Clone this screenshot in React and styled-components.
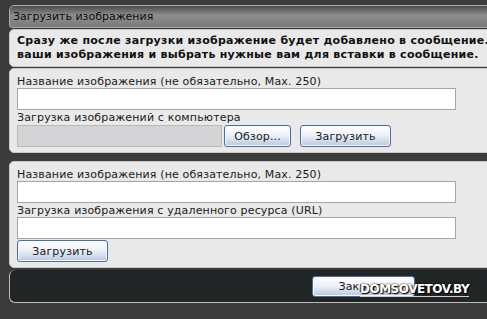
import styled, { createGlobalStyle } from "styled-components";

const Global = createGlobalStyle`
  html, body {
    margin: 0;
    background: #3b3b3b;
    overflow: hidden;
  }
  body {
    font-family: "DejaVu Sans", Verdana, sans-serif;
    font-size: 11px;
    color: #111;
  }
`;

const Dialog = styled.div`
  display: flex;
  flex-direction: column;
  gap: 1px;
  margin: 5px 0 0 9px;
  width: 500px;
`;

const Box = styled.div`
  border: 1px solid #c9c9c9;
  border-radius: 5px;
  background: #e9e9e9;
`;

const Header = styled(Box)`
  height: 21px;
  padding: 0 3px;
  display: flex;
  align-items: center;
  background: linear-gradient(#4d4d4d 0%, #8e8e8e 45%, #7a7a7a 100%);
  border-color: #a8a8a8;
  border-radius: 5px 5px 3px 3px;
  color: #0c0c0c;
`;

const Info = styled(Box)`
  padding: 4px 7px;
  font-weight: bold;
  line-height: 14px;
  letter-spacing: 0.27px;
  white-space: nowrap;
`;

const Panel = styled(Box)`
  padding: 7px 7px 5px;
  display: flex;
  flex-direction: column;
`;

const Label = styled.div`
  height: 12px;
  line-height: 12px;
  letter-spacing: 0.15px;
  white-space: nowrap;
  color: #1a1a1a;
`;

const TextInput = styled.div`
  width: 437px;
  height: 20px;
  background: #fff;
  border: 1px solid #a4a4a4;
  margin-bottom: ${(p) => p.$mb ?? 2}px;
`;

const Row = styled.div`
  display: flex;
  align-items: center;
  margin-top: ${(p) => p.$mt || 0}px;
`;

const FileBox = styled.div`
  width: 205px;
  height: 22px;
  margin-right: 2px;
  background: #d4d4d6;
  border: 1px solid #b9b9b9;
  box-sizing: border-box;
`;

const Button = styled.div`
  box-sizing: border-box;
  width: ${(p) => p.$w}px;
  height: ${(p) => p.$h || 22}px;
  margin-left: ${(p) => p.$ml || 0}px;
  display: flex;
  align-items: center;
  justify-content: center;
  border: 1px solid #4d6e9c;
  border-radius: 3px;
  background: linear-gradient(#ffffff 0%, #eef1f7 45%, #b9c8de 100%);
  box-shadow: inset 0 0 0 1px #f4f7fb;
  font-family: "DejaVu Sans", Verdana, sans-serif;
  font-size: 11px;
  letter-spacing: 0.15px;
  color: #1a1a1a;
`;

const Gap = styled.div`
  height: 6px;
`;

const Footer = styled.div`
  position: relative;
  height: 32px;
  margin-top: 1px;
  background: #222526;
  border: 1px solid #bdbdbd;
  border-top: none;
  border-right: none;
  border-radius: 6px;
  display: flex;
  align-items: center;
  padding-left: 302px;
`;

const Watermark = styled.div`
  position: absolute;
  left: 350px;
  top: 13px;
  font-family: "DejaVu Sans", sans-serif;
  font-weight: bold;
  font-size: 12px;
  letter-spacing: -0.5px;
  color: #fff;
  text-shadow: 0 0 2px #000, 1px 1px 1px #000;
  border-bottom: 1px solid #cfcfcf;
  line-height: 13px;
`;

export default function App() {
  return (
    <>
      <Global />
      <Dialog>
        <Header>Загрузить изображения</Header>
        <Info>
          Сразу же после загрузки изображение будет добавлено в сообщение. Вы также можете открыть все
          <br />
          ваши изображения и выбрать нужные вам для вставки в сообщение.
        </Info>
        <Panel>
          <Label>Название изображения (не обязательно, Max. 250)</Label>
          <TextInput />
          <Label>Загрузка изображений с компьютера</Label>
          <Row $mt={1}>
            <FileBox />
            <Button $w={67}>Обзор...</Button>
            <Button $w={91} $ml={9}>Загрузить</Button>
          </Row>
        </Panel>
        <Gap />
        <Panel>
          <Label>Название изображения (не обязательно, Max. 250)</Label>
          <TextInput />
          <Label>Загрузка изображения с удаленного ресурса (URL)</Label>
          <TextInput $mb={1} />
          <Row>
            <Button $w={91}>Загрузить</Button>
          </Row>
        </Panel>
        <Footer>
          <Button $w={103} $h={21}>Закрыть</Button>
          <Watermark>DOMSOVETOV.BY</Watermark>
        </Footer>
      </Dialog>
    </>
  );
}
